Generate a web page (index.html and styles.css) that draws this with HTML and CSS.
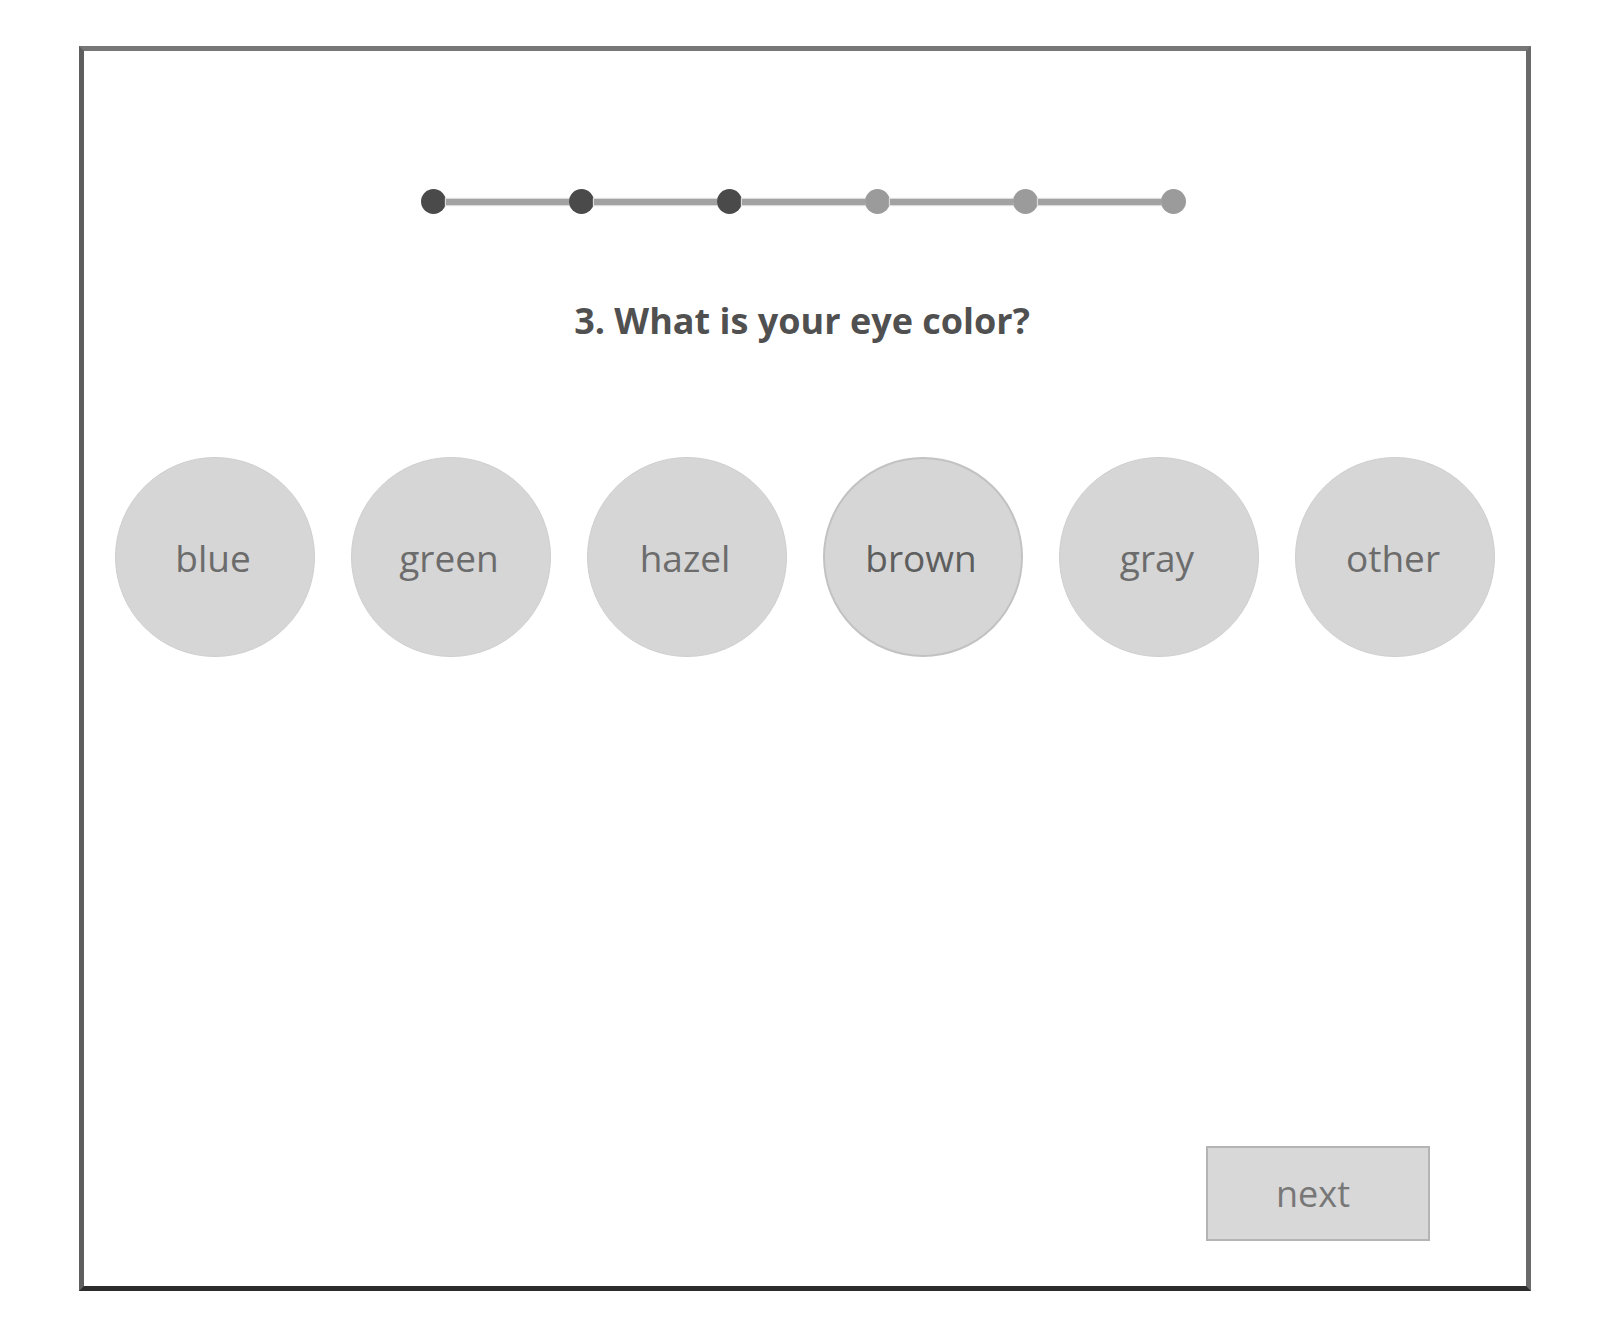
FILE: index.html
```html
<!DOCTYPE html>
<html lang="en">
<head>
<meta charset="utf-8">
<title>Eye color</title>
<link rel="stylesheet" href="styles.css">
</head>
<body>
<div class="frame">
  <div class="progress">
    <span class="dot done"></span><span class="seg"></span>
    <span class="dot done"></span><span class="seg"></span>
    <span class="dot done"></span><span class="seg"></span>
    <span class="dot"></span><span class="seg"></span>
    <span class="dot"></span><span class="seg"></span>
    <span class="dot"></span>
  </div>
  <h1 class="question">3. What is your eye color?</h1>
  <div class="options">
    <div class="option">blue</div>
    <div class="option">green</div>
    <div class="option">hazel</div>
    <div class="option selected">brown</div>
    <div class="option">gray</div>
    <div class="option">other</div>
  </div>
  <div class="footer">
    <div class="next">next</div>
  </div>
</div>
</body>
</html>
```
FILE: styles.css
```css
html, body {
  margin: 0;
  padding: 0;
  background: #fff;
}
body {
  font-family: "Open Sans", "Noto Sans", sans-serif;
}
.frame {
  box-sizing: border-box;
  margin: 46px 0 0 79px;
  width: 1452px;
  height: 1245px;
  border-style: solid;
  border-width: 5px 5px 5px 5px;
  border-color: #777 #6a6a6a #2c2c2c #5e5e5e;
  display: flex;
  flex-direction: column;
  align-items: center;
}
.progress {
  margin-top: 138px;
  margin-right: 4px;
  display: flex;
  align-items: center;
}
.dot {
  width: 25px;
  height: 25px;
  border-radius: 50%;
  background: #9b9b9b;
  flex: none;
}
.dot.done {
  background: #4a4a4a;
}
.seg {
  width: 123px;
  height: 6px;
  background: #a2a2a2;
  box-shadow: 0 0 1px 1px #dcdcdc;
  flex: none;
}
.question {
  margin: 83px 0 0 0;
  padding-right: 6px;
  font-size: 36px;
  line-height: 48px;
  font-weight: 700;
  color: #505050;
}
.options {
  margin-top: 112px;
  display: flex;
  gap: 36px;
}
.option {
  box-sizing: border-box;
  width: 200px;
  height: 200px;
  border-radius: 50%;
  background: #d6d6d6;
  border: 1px solid #cfcfcf;
  display: flex;
  align-items: center;
  justify-content: center;
  font-size: 37px;
  color: #6c6c6c;
  padding-right: 4px;
}
.option.selected {
  border: 2px solid #c2c2c2;
  color: #5e5e5e;
}
.footer {
  margin-top: auto;
  align-self: stretch;
  display: flex;
  justify-content: flex-end;
  padding: 0 96px 45px 0;
}
.next {
  box-sizing: border-box;
  width: 224px;
  height: 95px;
  background: #d8d8d8;
  border: 2px solid #b4b4b4;
  display: flex;
  align-items: center;
  justify-content: center;
  font-size: 36px;
  color: #777;
  padding-right: 10px;
}
```
